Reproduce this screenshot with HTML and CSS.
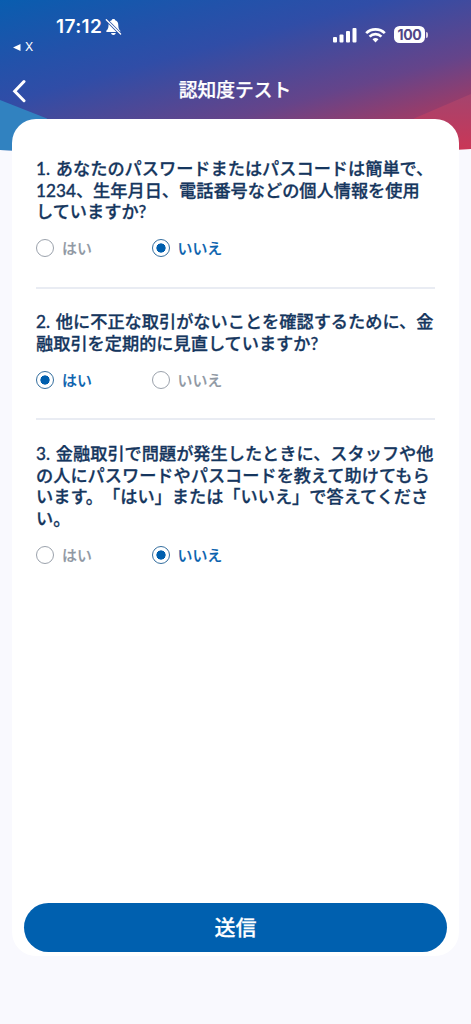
FILE: index.html
```html
<!DOCTYPE html>
<html lang="ja">
<head>
<meta charset="utf-8">
<meta name="viewport" content="width=device-width, initial-scale=1">
<title>認知度テスト</title>
<link rel="stylesheet" href="styles.css">
</head>
<body>
<div class="screen">
  <svg class="backdrop" width="471" height="156" viewBox="0 0 471 156" aria-hidden="true">
    <defs>
      <linearGradient id="sky" gradientUnits="userSpaceOnUse" x1="0" y1="0" x2="70" y2="260">
        <stop offset="0" stop-color="#095daf"/>
        <stop offset=".23" stop-color="#2252aa"/>
        <stop offset=".37" stop-color="#304da7"/>
        <stop offset=".47" stop-color="#434a9c"/>
        <stop offset=".65" stop-color="#65448a"/>
        <stop offset=".8" stop-color="#953d6c"/>
        <stop offset="1" stop-color="#d43455"/>
      </linearGradient>
      <linearGradient id="rose" x1="0" y1="0" x2="0" y2="1">
        <stop offset="0" stop-color="#a4446e"/>
        <stop offset="1" stop-color="#cb3656"/>
      </linearGradient>
    </defs>
    <path fill="url(#sky)" d="M0 0H471V149Q236 156 0 150Z"/>
    <path fill="#3182c0" d="M0 100L47 118.500L60 152Q30 152 0 150Z"/>
    <path fill="url(#rose)" d="M471 94L414 118.500L430 151L471 149Z"/>
  </svg>

  <header class="top">
    <div class="status">
      <div class="status-left">
        <span class="time">17:12</span>
        <svg class="bell" width="17" height="18" viewBox="0 0 17 18">
          <path fill="#fff" d="M8.500 1C7.500 1 6.900 1.500 6.700 2.300C4.300 3 3.500 4.800 3.500 7.200C3.500 10.200 2.700 11.200 1.500 12.600C.9 13.400 1.200 14 2 14H14.500C15.500 14 15.700 13.300 15.100 12.600C14 11.200 13.300 10.200 13.300 7.200C13.300 4.800 12.400 3 10.200 2.300C10 1.500 9.500 1 8.500 1ZM6 15H10.800C10.500 16.200 9.600 17 8.400 17C7.200 17 6.300 16.200 6 15Z"/>
          <path stroke="#2852a8" stroke-width="3" d="M1 1.500L16 16.500"/>
          <path stroke="#fff" stroke-width="1.300" stroke-linecap="round" d="M1.300 1.800L15.600 16"/>
        </svg>
      </div>
      <div class="status-right">
        <svg width="24" height="16" viewBox="0 0 24 16" fill="#fff">
          <rect x="0" y="10" width="4" height="5.500" rx="1"/>
          <rect x="6.500" y="7.500" width="4" height="8" rx="1"/>
          <rect x="13" y="4" width="4" height="11.500" rx="1"/>
          <rect x="19.500" y="1" width="4" height="14.500" rx="1"/>
        </svg>
        <svg width="21" height="16" viewBox="0 0 21 16" fill="none" stroke="#fff" stroke-width="2.700">
          <path d="M1.200 6.100A13.300 13.300 0 0 1 19.800 6.100"/>
          <path d="M4.600 9.600A8.500 8.500 0 0 1 16.400 9.600"/>
          <path fill="#fff" stroke="none" d="M7.500 12.300A4.400 4.400 0 0 1 13.500 12.300L10.500 15.400Z"/>
        </svg>
        <span class="battery"><span class="level">100</span><i class="cap"></i></span>
      </div>
    </div>
    <div class="return">
      <svg width="8" height="7" viewBox="0 0 8 7"><path fill="#fff" d="M0 3.500L7.500 0V7Z"/></svg>
      <span>X</span>
    </div>
    <div class="nav">
      <svg class="back" width="14" height="24" viewBox="0 0 14 24"><path fill="none" stroke="#fff" stroke-width="3" stroke-linecap="round" stroke-linejoin="miter" d="M12 2.500L2.700 12.300L12 21.700"/></svg>
      <h1 class="title">認知度テスト</h1>
    </div>
  </header>

  <main class="card">
    <section class="question">
      <p class="prompt"><span>1. あなたのパスワードまたはパスコードは簡単で、</span><span>1234、生年月日、電話番号などの個人情報を使用</span><span>していますか?</span></p>
      <div class="options">
        <div class="option"><i class="radio"></i><span>はい</span></div>
        <div class="option chosen"><i class="radio"></i><span>いいえ</span></div>
      </div>
    </section>
    <section class="question">
      <p class="prompt"><span>2. 他に不正な取引がないことを確認するために、金</span><span>融取引を定期的に見直していますか?</span></p>
      <div class="options">
        <div class="option chosen"><i class="radio"></i><span>はい</span></div>
        <div class="option"><i class="radio"></i><span>いいえ</span></div>
      </div>
    </section>
    <section class="question">
      <p class="prompt"><span>3. 金融取引で問題が発生したときに、スタッフや他</span><span>の人にパスワードやパスコードを教えて助けてもら</span><span>います。「はい」または「いいえ」で答えてくださ</span><span>い。</span></p>
      <div class="options">
        <div class="option"><i class="radio"></i><span>はい</span></div>
        <div class="option chosen"><i class="radio"></i><span>いいえ</span></div>
      </div>
    </section>
    <button class="submit" type="button">送信</button>
  </main>
</div>
</body>
</html>
```
FILE: styles.css
```css
* { box-sizing: border-box; }

body {
  margin: 0;
  background: #f9f9fe;
  font-family: Lato, "Noto Sans CJK JP", sans-serif;
  text-spacing-trim: space-all;
}

.screen {
  position: relative;
  width: 471px;
  height: 1024px;
  overflow: hidden;
  display: flex;
  flex-direction: column;
}

.backdrop { position: absolute; top: 0; left: 0; }

.top {
  position: relative;
  height: 119px;
  flex: none;
  color: #fff;
}

.status {
  display: flex;
  justify-content: space-between;
  height: 40px;
  padding: 16px 43px 0 56px;
}

.status-left { display: flex; gap: 3px; height: 22px; align-items: center; }

.time {
  font: 600 19px/22px Inter, sans-serif;
  letter-spacing: .4px;
}

.status-right {
  display: flex;
  align-items: center;
  gap: 8px;
  height: 17px;
  margin-top: 10px;
}

.battery { display: flex; align-items: center; gap: 1px; }

.level {
  width: 31px;
  height: 17px;
  border-radius: 5.500px;
  background: #fff;
  color: #504687;
  font: 700 14px/17px Inter, sans-serif;
  letter-spacing: -.3px;
  text-align: center;
}

.cap { width: 2px; height: 6px; border-radius: 0 2px 2px 0; background: #d9cfe1; }

.return {
  display: flex;
  align-items: center;
  gap: 4px;
  height: 14px;
  padding-left: 13px;
  font: 400 12px/14px Inter, sans-serif;
}

.nav {
  display: grid;
  grid-template-columns: 34px 1fr 34px;
  align-items: center;
  height: 24px;
  margin-top: 24px;
  padding: 0 12px;
}

.title {
  grid-column: 2;
  margin: 0 1px 2px 0;
  font-size: 18.800px;
  font-weight: 500;
  -webkit-text-stroke: .25px currentColor;
  line-height: 24px;
  text-align: center;
}

.card {
  position: relative;
  display: flex;
  flex-direction: column;
  width: 447px;
  height: 837px;
  margin-left: 12px;
  padding: 39px 12px 4px;
  border-radius: 24px;
  background: #fff;
}

.question {
  margin: 0 12px;
  padding-bottom: 29.500px;
}

.question + .question {
  padding-top: 22.500px;
  border-top: 2px solid #e9ecf3;
}

.prompt {
  margin: 0;
  color: #15365e;
  font-size: 17.200px;
  font-weight: 500;
  -webkit-text-stroke: .3px currentColor;
  line-height: 21.600px;
}

.prompt span { display: block; white-space: nowrap; word-spacing: 1.500px; }

.options {
  display: grid;
  grid-template-columns: 115.500px 1fr;
  height: 18px;
  margin-top: 16.500px;
}

.option {
  display: flex;
  align-items: center;
  gap: 8px;
  color: #8f98a3;
  font-size: 14.900px;
  font-weight: 500;
  -webkit-text-stroke: .2px currentColor;
  line-height: 18px;
}

.radio {
  width: 18px;
  height: 18px;
  border: 1.500px solid #9ba2ac;
  border-radius: 50%;
}

.chosen { color: #0962ae; }

.chosen .radio {
  border-color: #356f9f;
  background: radial-gradient(circle, #005fae 4.300px, transparent 4.900px);
}

.submit {
  height: 49px;
  margin-top: auto;
  padding: 0 0 2px;
  border: 0;
  border-radius: 25px;
  background: #0060af;
  color: #fff;
  font: 500 21px/47px Lato, "Noto Sans CJK JP", sans-serif;
  -webkit-text-stroke: .25px currentColor;
}
```
